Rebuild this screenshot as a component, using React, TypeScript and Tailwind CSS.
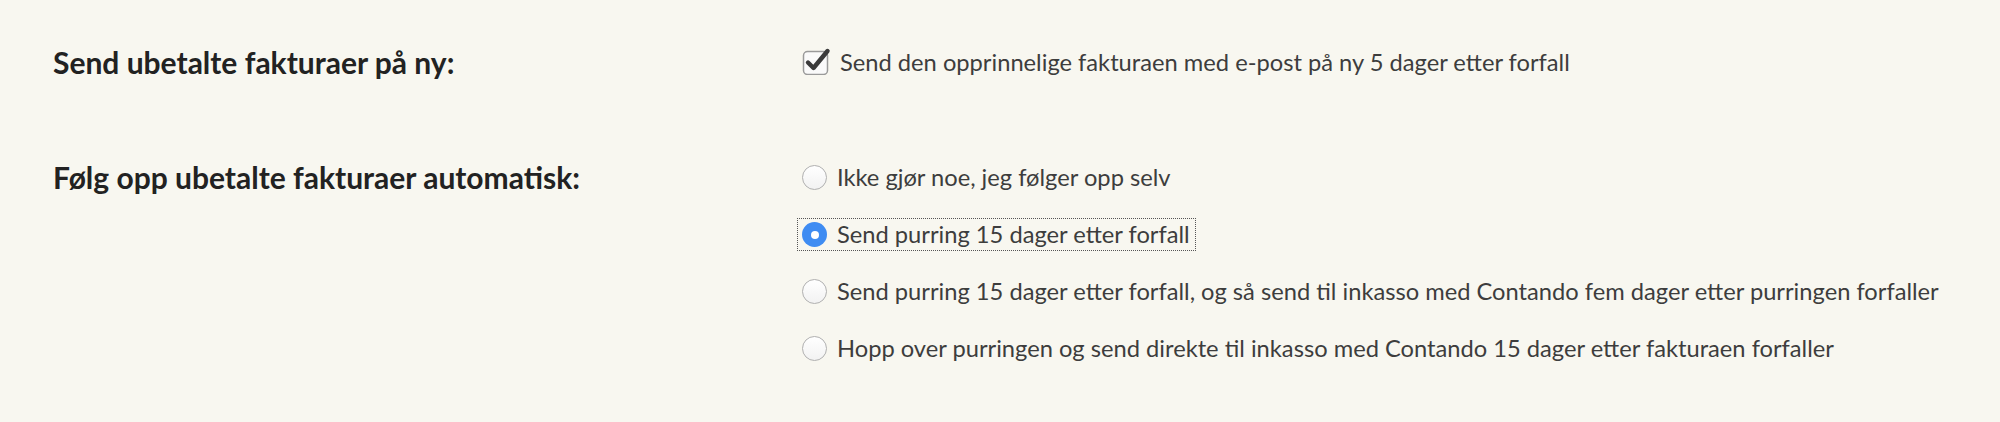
import { useState } from "react";

const options = [
  "Ikke gjør noe, jeg følger opp selv",
  "Send purring 15 dager etter forfall",
  "Send purring 15 dager etter forfall, og så send til inkasso med Contando fem dager etter purringen forfaller",
  "Hopp over purringen og send direkte til inkasso med Contando 15 dager etter fakturaen forfaller",
];

function CheckBox({ checked }: { checked: boolean }) {
  return (
    <svg width="30" height="30" viewBox="0 0 30 30" className="shrink-0 -mt-[6px]">
      <rect x="1.5" y="6.5" width="24" height="23" rx="4" fill="#fafafa" stroke="#9a9a9a" strokeWidth="1.5" />
      {checked && (
        <path d="M6 17.5 L11.5 23 L25.5 6" fill="none" stroke="#3a3a3a" strokeWidth="4.4" strokeLinecap="round" strokeLinejoin="round" />
      )}
    </svg>
  );
}

function Radio({ checked }: { checked: boolean }) {
  if (checked) {
    return (
      <span className="flex h-[25px] w-[25px] shrink-0 items-center justify-center rounded-full bg-[#3f8cf2]">
        <span className="h-[8px] w-[8px] rounded-full bg-white" />
      </span>
    );
  }
  return <span className="h-[25px] w-[25px] shrink-0 rounded-full border border-[#b0b0b0] bg-gradient-to-b from-white to-[#f2f2f2]" />;
}

export default function App() {
  const [resend, setResend] = useState(true);
  const [followUp, setFollowUp] = useState(1);
  return (
    <div className="min-h-[422px] bg-[#f8f7f0] pl-[53px] pt-[34px] font-['Lato','Liberation_Sans',sans-serif]">
      <section className="flex">
        <div className="flex h-[57px] w-[749px] items-center">
          <h2 className="text-[30px] font-bold text-[#222]">Send ubetalte fakturaer på ny:</h2>
        </div>
        <label className="flex h-[57px] cursor-pointer items-center gap-[8px] text-[23.7px] text-[#3d3d3d]" onClick={() => setResend(!resend)}>
          <CheckBox checked={resend} />
          <span>Send den opprinnelige fakturaen med e-post på ny 5 dager etter forfall</span>
        </label>
      </section>
      <section className="mt-[58px] flex">
        <div className="flex h-[57px] w-[749px] items-center">
          <h2 className="text-[30px] font-bold text-[#222]">Følg opp ubetalte fakturaer automatisk:</h2>
        </div>
        <div className="flex flex-col">
          {options.map((text, i) => (
            <div key={i} className="flex h-[57px] items-center">
              <label
                onClick={() => setFollowUp(i)}
                className={`-ml-[5px] flex h-[33px] cursor-pointer items-center gap-[10px] border border-dotted pl-[4px] pr-[5px] text-[23.7px] text-[#3d3d3d] ${followUp === i ? "border-[#555]" : "border-transparent"}`}
              >
                <Radio checked={followUp === i} />
                <span>{text}</span>
              </label>
            </div>
          ))}
        </div>
      </section>
    </div>
  );
}
